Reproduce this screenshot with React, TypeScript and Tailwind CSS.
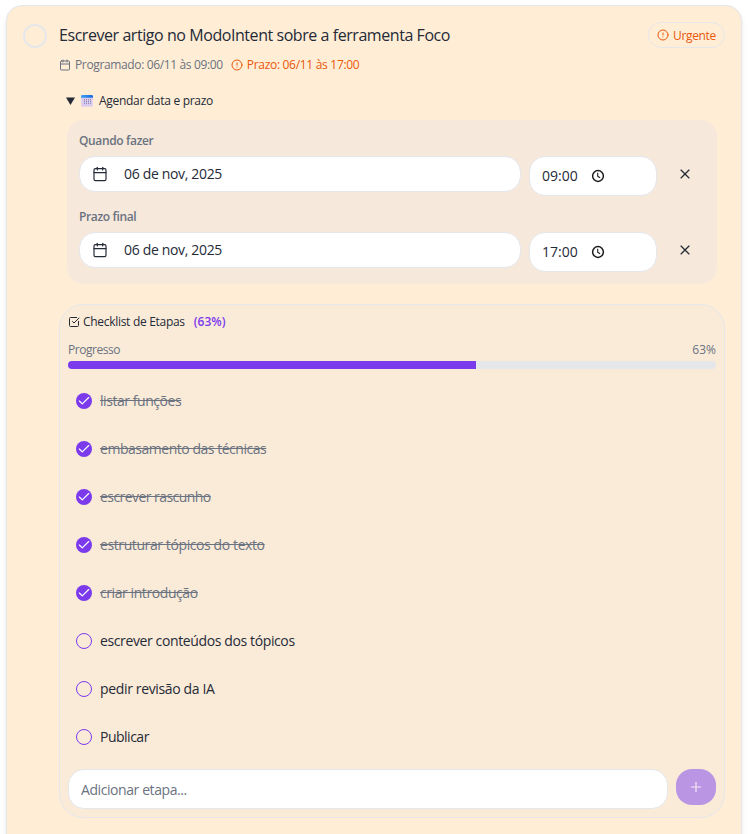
import { Calendar, Check, CircleAlert, Plus, SquareCheckBig, X } from "lucide-react";

const steps = [
  { label: "listar funções", done: true, tracking: "tracking-[-0.44px]" },
  { label: "embasamento das técnicas", done: true, tracking: "tracking-[-0.47px]" },
  { label: "escrever rascunho", done: true, tracking: "tracking-[-0.55px]" },
  { label: "estruturar tópicos do texto", done: true, tracking: "tracking-[-0.4px]" },
  { label: "criar introdução", done: true, tracking: "tracking-[-0.42px]" },
  { label: "escrever conteúdos dos tópicos", done: false, tracking: "tracking-[-0.38px]" },
  { label: "pedir revisão da IA", done: false, tracking: "tracking-[-0.35px]" },
  { label: "Publicar", done: false, tracking: "tracking-[-0.5px]" },
];

const progress = 63;

function CalendarEmoji() {
  return (
    <svg width="12" height="12" viewBox="0 0 12 12" className="shrink-0">
      <defs>
        <linearGradient id="calendar-top" x1="0" x2="1">
          <stop offset="0" stopColor="#3fa0f5" />
          <stop offset="1" stopColor="#1769e0" />
        </linearGradient>
      </defs>
      <rect x="0.2" y="0.4" width="11.6" height="11.4" rx="1.4" fill="#dccdf0" />
      <path d="M0 2.8V1.3C0 .6.6 0 1.4 0h9.2c.8 0 1.4.6 1.4 1.3v1.5z" fill="url(#calendar-top)" />
      <path d="M3.5 4v5.4M5.5 4v5.4M7.5 4v5.4M9.5 4v5.4" stroke="#8f8bb5" strokeWidth="1" strokeDasharray="1.3 .6" />
    </svg>
  );
}

function TimePickerIcon() {
  return (
    <svg width="14" height="14" viewBox="0 0 14 14" fill="none" stroke="#1b1b1b" className="ml-[13px] shrink-0">
      <circle cx="7" cy="7" r="5.4" strokeWidth="1.5" />
      <path d="M6.7 3.8v3.4l2.4 1.6" strokeWidth="1.1" />
    </svg>
  );
}

function ScheduleRow({ label, date, time }: { label: string; date: string; time: string }) {
  return (
    <div>
      <div className="h-4 text-[12px] leading-4 font-semibold tracking-[-0.36px] text-[#6b7280]">{label}</div>
      <div className="mt-[7px] flex h-10 items-start">
        <button className="flex h-9 w-[442px] items-center rounded-2xl border border-gray-200 bg-white pl-3 text-left">
          <Calendar size={16} strokeWidth={1.75} />
          <span className="ml-4 text-[14px] leading-5 tracking-[-0.33px]">{date}</span>
        </button>
        <div className="ml-2 flex h-10 w-32 items-center rounded-2xl border border-gray-200 bg-white pl-3">
          <span className="w-9 text-[14px] leading-5">{time}</span>
          <TimePickerIcon />
        </div>
        <button className="ml-2 flex h-9 w-10 items-center justify-center">
          <X size={16} strokeWidth={1.75} />
        </button>
      </div>
    </div>
  );
}

function Step({ label, done, tracking }: { label: string; done: boolean; tracking: string }) {
  return (
    <li className="flex h-12 items-center gap-2 pl-2">
      {done ? (
        <span className="flex size-4 shrink-0 items-center justify-center rounded-full bg-[#7c3aed] text-white">
          <Check size={14} strokeWidth={2} />
        </span>
      ) : (
        <span className="size-4 shrink-0 rounded-full border border-[#7c3aed]" />
      )}
      <span className={`text-[14px] leading-5 ${tracking} ${done ? "text-[#6b7280] line-through" : ""}`}>{label}</span>
    </li>
  );
}

export default function App() {
  return (
    <div className="h-[834px] overflow-hidden bg-white pt-[5px] pr-[10px] pl-[6px] font-['Open_Sans','Noto_Sans',sans-serif] text-[#252a37]">
      <article className="flex h-[860px] items-start rounded-2xl border border-gray-200 bg-[#ffedd5] pt-4 pr-4 pl-4 shadow-md">
        <button className="mt-[2px] size-6 shrink-0 rounded-full border-2 border-gray-200" />
        <div className="ml-3 w-[666px]">
          <div className="flex h-[26px] items-center justify-between">
            <h3 className="text-[16px] leading-6 tracking-[-0.44px] whitespace-nowrap">
              Escrever artigo no ModoIntent sobre a ferramenta Foco
            </h3>
            <span className="flex h-[26px] w-[77px] items-center justify-center gap-1 rounded-full border border-gray-200 text-[12px] tracking-[-0.35px] text-[#ea580c]">
              <CircleAlert size={12} strokeWidth={2} />
              <span className="pt-px">Urgente</span>
            </span>
          </div>
          <div className="mt-[9px] flex h-4 items-center gap-2 text-[12px] leading-4 tracking-[-0.36px] whitespace-nowrap">
            <span className="flex items-center gap-1 text-[#6b7280]">
              <Calendar size={12} className="-mt-px" />
              Programado: 06/11 às 09:00
            </span>
            <span className="flex items-center gap-1 text-[#ea580c]">
              <CircleAlert size={12} className="-mt-px" />
              <span className="tracking-[-0.3px]">Prazo: 06/11 às 17:00</span>
            </span>
          </div>
          <div className="mt-5 ml-[7px] flex h-4 items-center text-[12px] leading-4 tracking-[-0.3px]">
            <svg width="9" height="8" viewBox="0 0 9 8" fill="currentColor">
              <path d="M0 .5h9L4.5 8z" />
            </svg>
            <span className="ml-[6px] flex items-center gap-[6px]">
              <CalendarEmoji />
              Agendar data e prazo
            </span>
          </div>
          <section className="mt-[11px] mr-2 ml-2 h-[164px] space-y-[13px] rounded-2xl bg-[#f6e9dc] pt-[13px] pl-3">
            <ScheduleRow label="Quando fazer" date="06 de nov, 2025" time="09:00" />
            <ScheduleRow label="Prazo final" date="06 de nov, 2025" time="17:00" />
          </section>
          <section className="mt-5 h-[514px] rounded-3xl border border-gray-200 bg-[#faebd9] px-2 pt-[9px]">
            <div className="flex h-4 items-center text-[12px] leading-4">
              <SquareCheckBig size={12} className="-mt-px" />
              <span className="ml-[3px] tracking-[-0.3px]">Checklist de Etapas</span>
              <span className="ml-[9px] font-semibold text-[#7c3aed]">({progress}%)</span>
            </div>
            <div className="mt-3 flex h-4 items-center justify-between text-[12px] leading-4 tracking-[-0.45px] text-[#6b7280]">
              <span>Progresso</span>
              <span className="tracking-normal">{progress}%</span>
            </div>
            <div className="mt-[3px] h-2 overflow-hidden rounded-full bg-gray-200">
              <div className="h-full bg-[#7c3aed]" style={{ width: `${progress}%` }} />
            </div>
            <ul className="mt-2">
              {steps.map((step) => (
                <Step key={step.label} {...step} />
              ))}
            </ul>
            <div className="mt-2 flex items-start gap-2">
              <input
                className="h-10 min-w-0 flex-1 rounded-2xl border border-gray-200 bg-white px-3 pt-px text-[14px] tracking-[-0.42px] placeholder:text-[#6b7280]"
                placeholder="Adicionar etapa..."
              />
              <button className="flex h-9 w-10 items-center justify-center rounded-2xl bg-[#ba95e3] text-[#f5e9f2]">
                <Plus size={16} strokeWidth={1.75} />
              </button>
            </div>
          </section>
        </div>
      </article>
    </div>
  );
}
